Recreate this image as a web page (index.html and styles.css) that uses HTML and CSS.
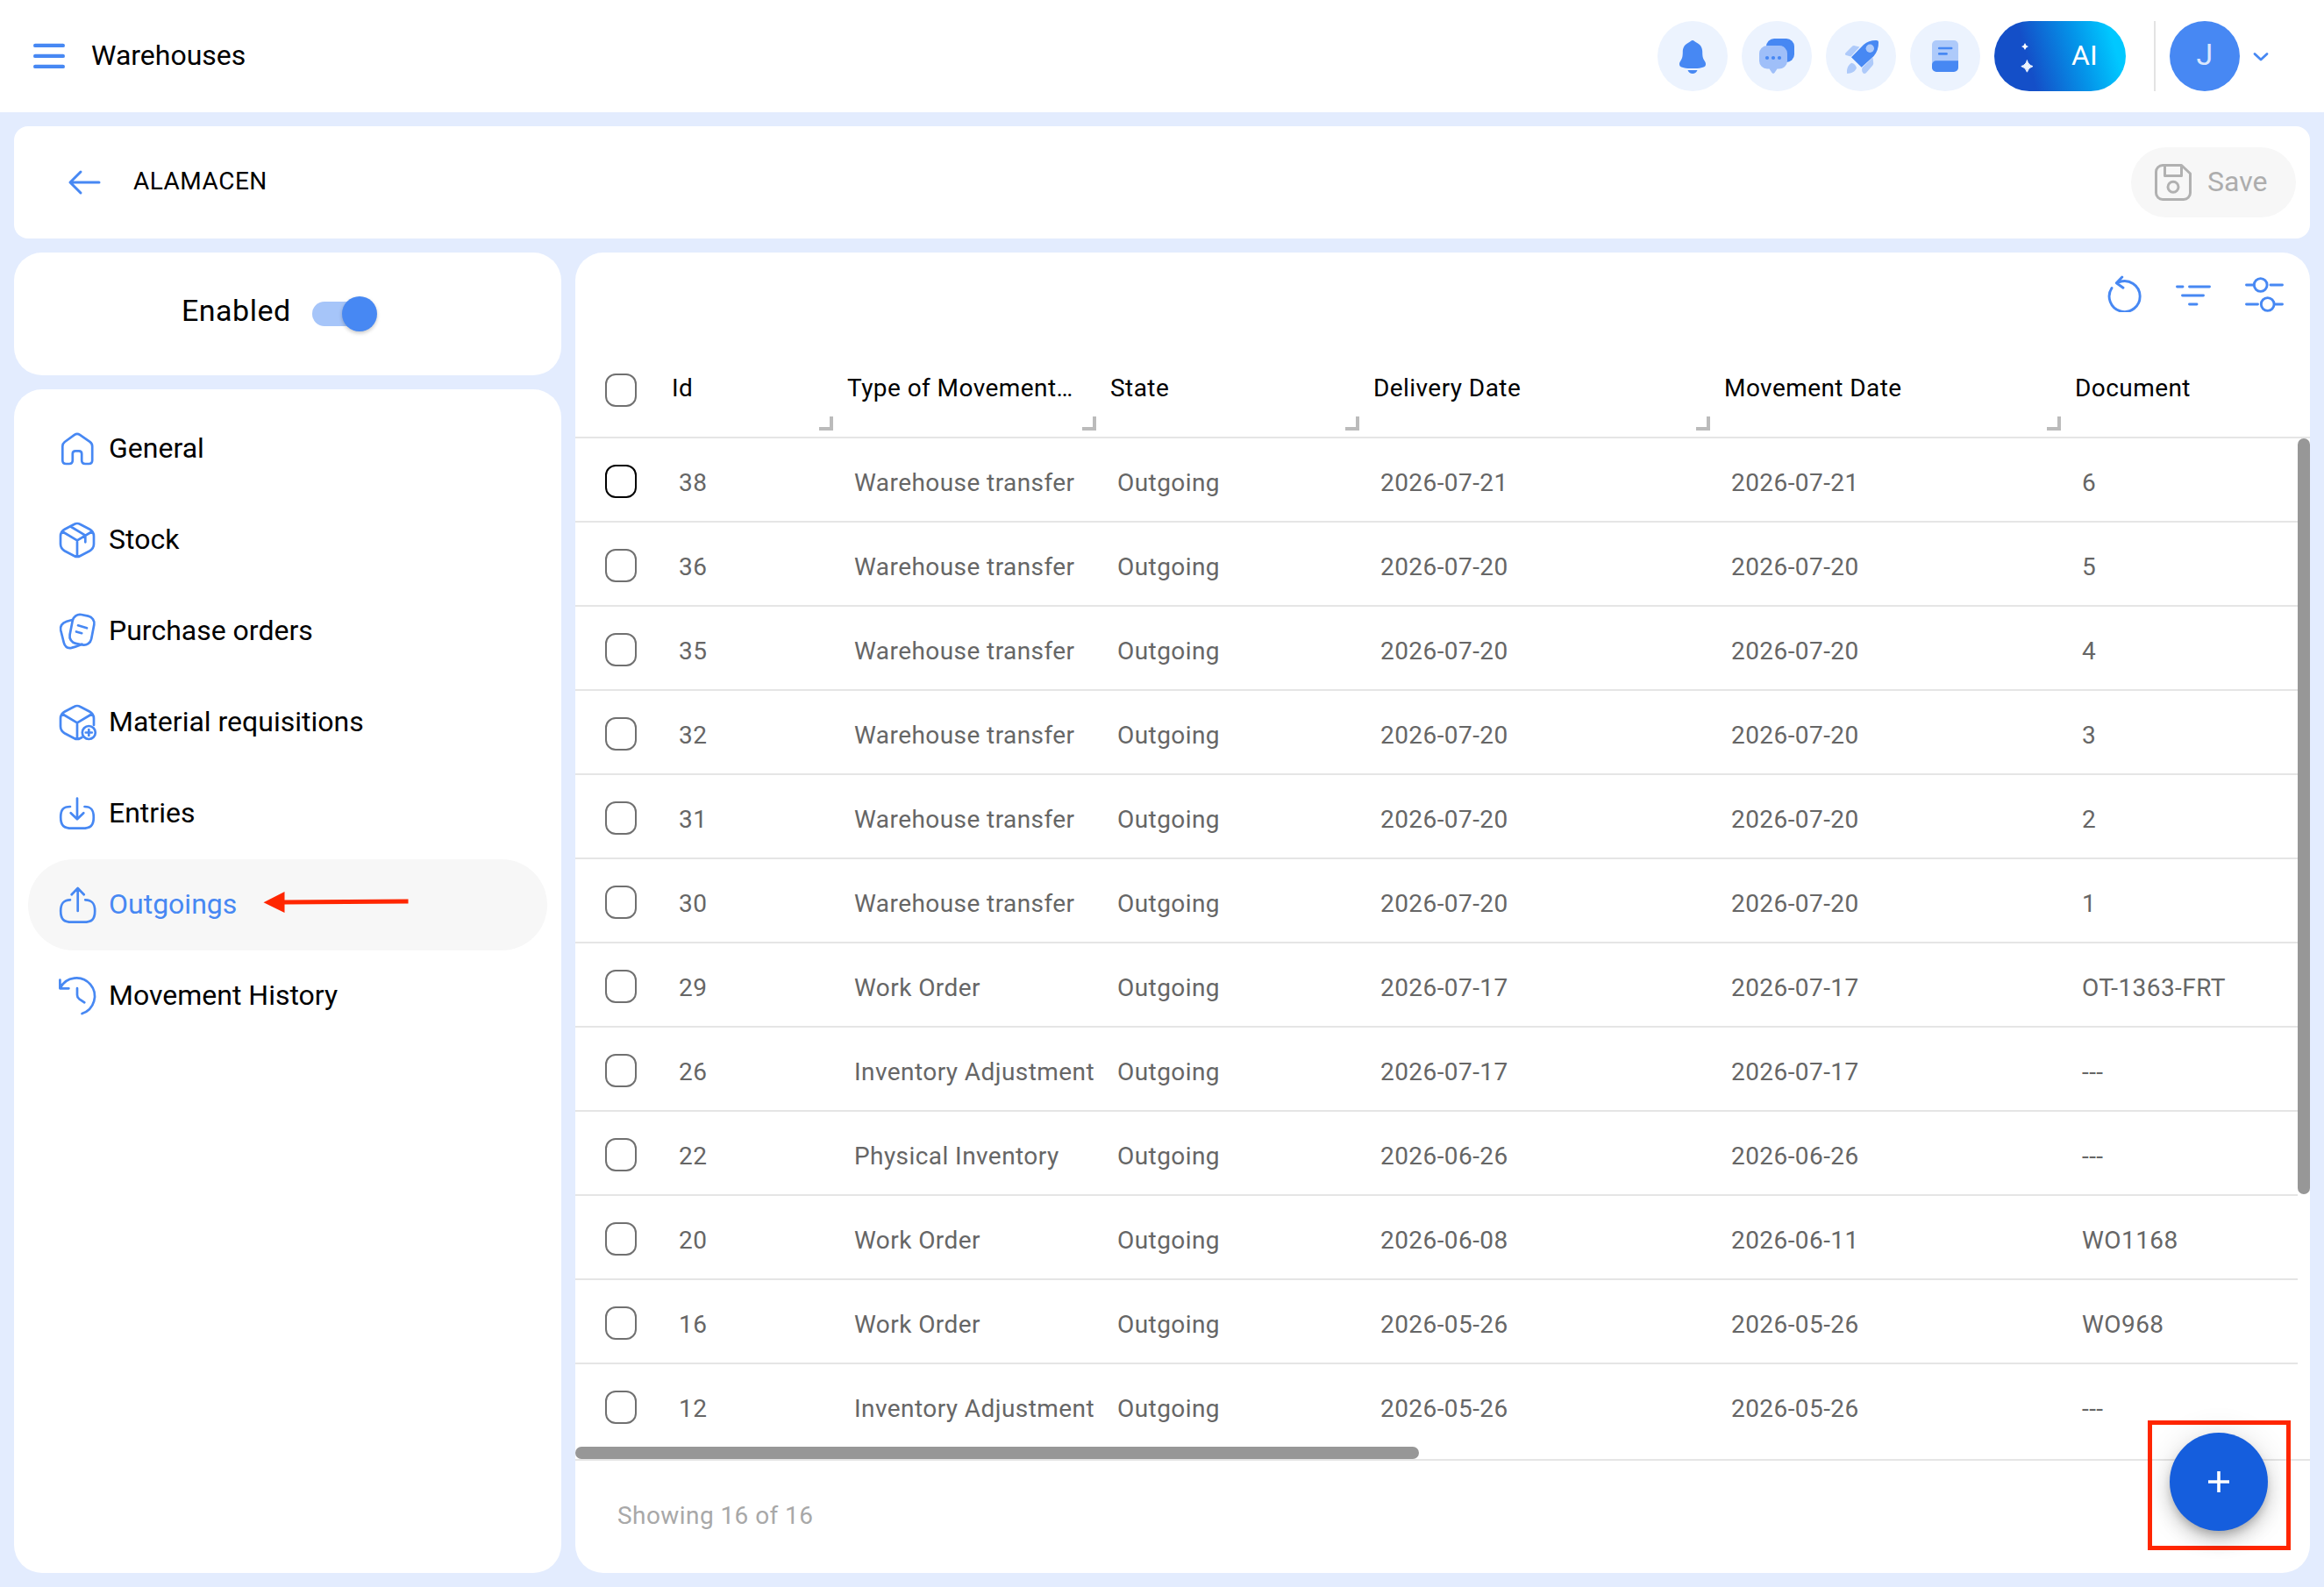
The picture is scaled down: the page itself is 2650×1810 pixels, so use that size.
FILE: index.html
```html
<!DOCTYPE html>
<html lang="en">
<head>
    <meta charset="UTF-8">
    <meta name="viewport" content="width=device-width, initial-scale=1.0">
    <title>Warehouses</title>
    <link rel="stylesheet" href="styles.css">
</head>
<body>
    <header class="topbar">
        <svg class="menu-icon" width="36" height="30" viewBox="0 0 36 30"><path d="M2.2 2.900h31.600M2.200 14.900h31.600M2.200 26.900h31.600"/></svg>
        <h1 class="title">Warehouses</h1>
        <div class="actions">
            <div class="round">
                <svg viewBox="0 0 80 80">
                    <path class="main" d="M40 22c1.6 0 2.6 1.7 4.4 2.6 4.6 2.3 6.8 5.8 6.8 10.4 0 5 .5 7.400 2.200 10 1.400 2.200 2 3.600 1.400 5.400-.8 2.600-7 3.600-14.800 3.600s-14-1-14.800-3.600c-.6-1.800 0-3.200 1.400-5.400 1.700-2.600 2.200-5 2.200-10 0-4.600 2.200-8.100 6.800-10.400C37.400 23.700 38.400 22 40 22z"/>
                    <path class="main" d="M34.500 56h11c-1 2.600-3 4-5.500 4s-4.500-1.400-5.500-4z"/>
                </svg>
            </div>
            <div class="round">
                <svg viewBox="0 0 80 80">
                    <rect class="main" x="28" y="20" width="32" height="27" rx="9"/>
                    <path class="soft" d="M29 28h14a9 9 0 0 1 9 9v8.500a9 9 0 0 1-9 9h-2.500l-3 4.600a1.800 1.800 0 0 1-3 0l-3-4.600H29a9 9 0 0 1-9-9V37a9 9 0 0 1 9-9z"/>
                    <g class="main"><circle cx="29" cy="42" r="2.100"/><circle cx="36" cy="42" r="2.100"/><circle cx="43" cy="42" r="2.100"/></g>
                </svg>
            </div>
            <div class="round">
                <svg viewBox="0 0 80 80">
                    <path class="pale" d="M28.500 40.500l-5.500-1.500c-1.300-.6-1.300-1.800-.4-2.800l7-7c1-1 2-1.300 3.400-1l5.500 1.200zM41.500 53l12-11.500.7 6.200c.1 1.200-.2 2.200-1 3l-7.400 8.500c-1.200 1.200-3 1-3.800-.4-1.200-1.800-1-3.800-.5-5.800zM24.200 60c-.6-4 0-9 5-12.300 3.200.8 5.200 2.900 5.800 5.800-1.500 4.500-6 6-10.800 6.500z"/>
                    <path class="main" d="M29 41.300L43 27c4.200-3.500 9-5.200 14.500-5 1.600 0 2.500.8 2.500 2.300.2 6-1.600 11.200-5.400 15.700L40.700 52.700z"/>
                    <circle class="pale" cx="50.300" cy="31.300" r="4.700"/>
                </svg>
            </div>
            <div class="round">
                <svg viewBox="0 0 80 80">
                    <rect class="pale" x="25" y="22" width="30" height="35" rx="5"/>
                    <path class="main" d="M30 45.300h25V53a5 5 0 0 1-5 5H30a5 5 0 0 1-5-5v-3a4.700 4.700 0 0 1 5-4.700z"/>
                    <path class="line" d="M33.200 31h14M33.200 37.400h8.400"/>
                </svg>
            </div>
            <div class="ai">
                <svg width="50" height="80" viewBox="0 0 50 80"><path d="M35 25q.8 3.200 4 4-3.200.8-4 4-.8-3.200-4-4 3.200-.8 4-4z"/><path class="big" d="M37.400 45q1.400 5.200 6.600 6.600-5.200 1.400-6.600 6.600-1.400-5.200-6.600-6.600 5.200-1.400 6.600-6.600z"/></svg>
                <span>AI</span>
            </div>
            <div class="divider"></div>
            <div class="avatar">J</div>
            <svg class="chevron" width="18" height="12" viewBox="0 0 18 12"><path d="M2 2.500l7 6.500 7-6.500"/></svg>
        </div>
    </header>

    <div class="subbar">
        <svg class="back" width="38" height="30" viewBox="0 0 38 30"><path d="M36 15H3M15 3L3 15l12 12"/></svg>
        <span class="name">ALAMACEN</span>
        <button class="save">
            <svg width="42" height="42" viewBox="0 0 42 42"><path d="M9 1.500h21.500l10 9.500v22a7.500 7.500 0 0 1-7.500 7.500H9A7.500 7.500 0 0 1 1.500 33V9A7.500 7.500 0 0 1 9 1.500zM11.500 2v11.500h19V2"/><circle cx="21" cy="26.300" r="6"/></svg>
            <span>Save</span>
        </button>
    </div>

    <main class="content">
        <aside class="sidebar">
            <div class="card enabled">
                <span>Enabled</span>
                <div class="switch"><div class="knob"></div></div>
            </div>
            <nav class="card menu">
                <a class="item">
                    <svg viewBox="0 0 48 48"><path d="M21 7.900q3-2 6 0l11.500 8q2.700 2 2.700 5V37q0 4-4 4h-4q-4 0-4-4v-7.500q0-3.200-3.200-3.200h-4q-3.200 0-3.200 3.200V37q0 4-4 4h-3.500q-4 0-4-4V21q0-3 2.500-5z"/></svg>
                    <span>General</span>
                </a>
                <a class="item">
                    <svg viewBox="0 0 48 48"><path d="M20.500 6q3.500-2 7 0l10.500 5.500q5 2.800 5 8v9q0 5-5 8L27.500 42q-3.500 2-7 0L10 36.500q-5-3-5-8v-9q0-5.200 5-8zM7.500 14.500L24 24.300l16.500-9.800M24 24.300V43M16.500 8.500l16.800 10.200v7.600"/></svg>
                    <span>Stock</span>
                </a>
                <a class="item">
                    <svg viewBox="0 0 48 48"><rect x="17" y="5.500" width="25" height="33.500" rx="8.500" transform="rotate(11 29.500 22)"/><path d="M18.300 11l-6.300 1.800C6.300 14.800 4.300 18.300 5.300 23l3.500 14c1.300 4.800 4.200 6.700 8.700 5.900 4-1 8-2.500 12-4.200M25 17.300l10 3M23 24.500l6.200 1.700"/></svg>
                    <span>Purchase orders</span>
                </a>
                <a class="item">
                    <svg viewBox="0 0 48 48"><path d="M29.500 41L27.500 42q-3.500 2-7 0L10 36.500q-5-3-5-8v-9q0-5.200 5-8L20.500 6q3.500-2 7 0L38 11.500q5 2.800 5 8V27M7.500 14.500L24 24.300l16.500-9.800M24 24.300V43"/><circle cx="37.300" cy="35.500" r="7.500"/><path d="M37.300 32v7M33.800 35.500h7"/></svg>
                    <span>Material requisitions</span>
                </a>
                <a class="item">
                    <svg viewBox="0 0 48 48"><path d="M16 16C8.500 16 5.200 19 5.200 28c0 9.500 3.500 12.700 13 12.700h11.600c9.500 0 13-3.200 13-12.700 0-9-3.300-12-10.300-12M24 6.500V30M16.700 23.300L24 30.300l7.300-7"/></svg>
                    <span>Entries</span>
                </a>
                <a class="item active">
                    <svg viewBox="0 0 48 48"><path d="M16 18.300C8.500 18.500 5.200 22 5.200 31c0 9.500 3.500 12.700 13 12.700h13c9.500 0 13-3.200 13-12.700 0-9-3.300-12.500-11-12.700M24.700 31V5M17.700 12.300l7-7.300 7 7.300"/></svg>
                    <span>Outgoings</span>
                    <svg class="pointer" width="166" height="26" viewBox="0 0 166 26"><path d="M24.500 10.600L165.500 9.500v5L24.500 15.600V25L.5 13.200l24-12.200z"/></svg>
                </a>
                <a class="item">
                    <svg viewBox="0 0 48 48"><path d="M4.600 14.800A20.800 20.800 0 1 1 29.500 44M4.400 5.500v9.800h10M24 15.200v7.500c0 2.300.5 3.200 2.300 4.600l6 4"/></svg>
                    <span>Movement History</span>
                </a>
            </nav>
        </aside>

        <section class="card table">
            <div class="tools">
                <svg width="40" height="46" viewBox="0 0 40 46"><path d="M6 18.500A17.500 17.500 0 1 0 14.500 11.700L11.500 12.300M17.800 6L11.300 12.700l7.700 5.500"/></svg>
                <svg width="40" height="46" viewBox="0 0 40 46"><path d="M1.500 17h6.500M15.500 17h23M7.500 27h24M15.500 37h8.500"/></svg>
                <svg width="44" height="46" viewBox="0 0 44 46"><path d="M1.500 15H10M29 15h13.500M1.500 37H14.500M34.500 37h8"/><circle cx="17.700" cy="15" r="7.400"/><circle cx="25.700" cy="37" r="7.400"/></svg>
            </div>
            <div class="row head">
                <div><i class="check"></i></div>
                <div class="col">Id</div>
                <div class="col">Type of Movement…</div>
                <div class="col">State</div>
                <div class="col">Delivery Date</div>
                <div class="col">Movement Date</div>
                <div>Document</div>
            </div>
            <div class="body">
                <div class="rows">
                    <div class="row"><div><i class="check focus"></i></div><div>38</div><div>Warehouse transfer</div><div>Outgoing</div><div>2026-07-21</div><div>2026-07-21</div><div>6</div></div>
                    <div class="row"><div><i class="check"></i></div><div>36</div><div>Warehouse transfer</div><div>Outgoing</div><div>2026-07-20</div><div>2026-07-20</div><div>5</div></div>
                    <div class="row"><div><i class="check"></i></div><div>35</div><div>Warehouse transfer</div><div>Outgoing</div><div>2026-07-20</div><div>2026-07-20</div><div>4</div></div>
                    <div class="row"><div><i class="check"></i></div><div>32</div><div>Warehouse transfer</div><div>Outgoing</div><div>2026-07-20</div><div>2026-07-20</div><div>3</div></div>
                    <div class="row"><div><i class="check"></i></div><div>31</div><div>Warehouse transfer</div><div>Outgoing</div><div>2026-07-20</div><div>2026-07-20</div><div>2</div></div>
                    <div class="row"><div><i class="check"></i></div><div>30</div><div>Warehouse transfer</div><div>Outgoing</div><div>2026-07-20</div><div>2026-07-20</div><div>1</div></div>
                    <div class="row"><div><i class="check"></i></div><div>29</div><div>Work Order</div><div>Outgoing</div><div>2026-07-17</div><div>2026-07-17</div><div>OT-1363-FRT</div></div>
                    <div class="row"><div><i class="check"></i></div><div>26</div><div>Inventory Adjustment</div><div>Outgoing</div><div>2026-07-17</div><div>2026-07-17</div><div>---</div></div>
                    <div class="row"><div><i class="check"></i></div><div>22</div><div>Physical Inventory</div><div>Outgoing</div><div>2026-06-26</div><div>2026-06-26</div><div>---</div></div>
                    <div class="row"><div><i class="check"></i></div><div>20</div><div>Work Order</div><div>Outgoing</div><div>2026-06-08</div><div>2026-06-11</div><div>WO1168</div></div>
                    <div class="row"><div><i class="check"></i></div><div>16</div><div>Work Order</div><div>Outgoing</div><div>2026-05-26</div><div>2026-05-26</div><div>WO968</div></div>
                    <div class="row"><div><i class="check"></i></div><div>12</div><div>Inventory Adjustment</div><div>Outgoing</div><div>2026-05-26</div><div>2026-05-26</div><div>---</div></div>
                </div>
                <div class="vscroll"></div>
            </div>
            <div class="hscroll"></div>
            <div class="footer">Showing 16 of 16</div>
            <div class="highlight">
                <button class="add"><svg width="26" height="26" viewBox="0 0 26 26"><path d="M13 1v24M1 13h24"/></svg></button>
            </div>
        </section>
    </main>
</body>
</html>
```
FILE: styles.css
```css
* {
    box-sizing: border-box;
}

body {
    margin: 0;
    height: 1810px;
    display: flex;
    flex-direction: column;
    background-color: #e3ecfe;
    font-family: Roboto, Arial, sans-serif;
    font-size: 32px;
    color: #000;
    overflow: hidden;
}

svg {
    flex: none;
    fill: none;
    stroke: #4788f3;
    stroke-linecap: round;
    stroke-linejoin: round;
}

button {
    font: inherit;
    border: none;
    padding: 0;
}

/* top bar */
.topbar {
    height: 128px;
    background-color: #fff;
    display: flex;
    align-items: center;
    padding: 0 63px 0 38px;
}

.menu-icon {
    stroke-width: 4.4;
}

.title {
    margin: 0 0 2px 30px;
    font-size: 32px;
    font-weight: 400;
}

.actions {
    margin-left: auto;
    display: flex;
    align-items: center;
    gap: 16px;
}

.round {
    width: 80px;
    height: 80px;
    border-radius: 50%;
    background-color: #ecf3fe;
}

.round svg {
    display: block;
    stroke: none;
}

.round .main {
    fill: #4788f3;
}

.round .soft {
    fill: #9fbff9;
}

.round .pale {
    fill: #aecafa;
}

.round .line {
    stroke: #4788f3;
    stroke-width: 2.6;
}

.ai {
    width: 150px;
    height: 80px;
    border-radius: 40px;
    background: linear-gradient(74deg, #144fc8 28%, #0494e9 63%, #00c8ff 88%);
    color: #fff;
    display: flex;
    align-items: center;
}

.ai svg {
    fill: #fff;
    stroke: none;
}

.ai .big {
    fill: #ecf3fe;
    stroke: #ecf3fe;
    stroke-width: 1;
}

.ai span {
    margin: 0 0 3px 38px;
}

.divider {
    width: 2px;
    height: 80px;
    margin-left: 16px;
    background-color: #e3e3e3;
}

.avatar {
    width: 80px;
    height: 80px;
    border-radius: 50%;
    background-color: #4788f3;
    color: #dae7fd;
    font-size: 34px;
    line-height: 77px;
    text-align: center;
}

.chevron {
    stroke-width: 2.8;
    margin: 2px 0 0 -1px;
}

/* record bar */
.subbar {
    height: 128px;
    margin: 16px 16px 0;
    padding: 0 16px 0 61px;
    border-radius: 16px;
    background-color: #fff;
    display: flex;
    align-items: center;
}

.back {
    stroke-width: 3;
    margin-bottom: 1px;
}

.name {
    margin: 0 0 3px 37px;
    font-size: 28px;
    letter-spacing: .5px;
}

.save {
    margin-left: auto;
    width: 188px;
    height: 80px;
    border-radius: 40px;
    padding-left: 27px;
    background-color: #f7f7f7;
    color: #adadad;
    display: flex;
    align-items: center;
    gap: 18px;
}

.save svg {
    stroke: #b1b1b1;
    stroke-width: 3;
}

.save span {
    margin-bottom: 2px;
}

.content {
    flex: 1;
    display: flex;
    gap: 16px;
    padding: 16px;
    min-height: 0;
}

.card {
    background-color: #fff;
    border-radius: 32px;
}

/* sidebar */
.sidebar {
    width: 624px;
    display: flex;
    flex-direction: column;
    gap: 16px;
}

.enabled {
    height: 140px;
    display: flex;
    align-items: center;
    padding-left: 191px;
    font-size: 34px;
}

.enabled span {
    width: 149px;
    margin-bottom: 9px;
    letter-spacing: .5px;
}

.switch {
    width: 72px;
    height: 28px;
    border-radius: 14px;
    background-color: #a6c5f9;
    display: flex;
    align-items: center;
    justify-content: flex-end;
}

.knob {
    flex: none;
    width: 40px;
    height: 40px;
    margin-right: -2px;
    border-radius: 50%;
    background-color: #4788f3;
    box-shadow: 0 2px 4px rgba(0, 0, 0, .22);
}

.menu {
    flex: 1;
    padding: 16px;
}

.item {
    height: 104px;
    padding-left: 32px;
    border-radius: 52px;
    display: flex;
    align-items: center;
    gap: 12px;
}

.item span {
    margin-bottom: 3px;
}

.item svg {
    width: 48px;
    height: 48px;
    stroke-width: 2.7;
}

.item.active {
    background-color: #f7f7f7;
    color: #4788f3;
}

.item .pointer {
    width: 166px;
    height: 26px;
    margin: 0 0 6px 18px;
    fill: #ff2600;
    stroke: none;
}

/* table */
.table {
    flex: 1;
    position: relative;
    display: flex;
    flex-direction: column;
    font-size: 28px;
    letter-spacing: .43px;
}

.tools {
    height: 104px;
    display: flex;
    justify-content: flex-end;
    gap: 39px;
    padding: 22px 30px 0 0;
}

.tools svg {
    stroke-width: 2.9;
}

.row {
    display: grid;
    grid-template-columns: 102px 200px 300px 300px 400px 400px 1fr;
    height: 96px;
    align-items: center;
    border-bottom: 2px solid #e5e5e5;
    color: #666;
    white-space: nowrap;
}

.row div {
    padding: 6px 0 0 16px;
}

.row div:first-child {
    padding: 4px 0 0 34px;
}

.row.head {
    grid-template-columns: 94px 200px 300px 300px 400px 400px 1fr;
    height: 108px;
    color: #000;
    align-items: stretch;
}

.head div {
    padding-top: 34px;
}

.row.head div:first-child {
    padding-top: 34px;
}

.col {
    position: relative;
}

/* resize grip */
.col::after {
    content: "";
    position: absolute;
    right: 0;
    bottom: 7px;
    width: 12px;
    height: 12px;
    border-right: 4px solid #bbb;
    border-bottom: 4px solid #bbb;
}

.check {
    display: block;
    width: 36px;
    height: 38px;
    border: 2px solid #707070;
    border-radius: 12px;
}

.check.focus {
    border-color: #000;
}

.body {
    height: 1150px;
    display: flex;
    overflow: hidden;
}

.rows {
    flex: 1;
}

.vscroll {
    width: 14px;
    height: 862px;
    border-radius: 7px;
    background-color: #979797;
}

.hscroll {
    width: 962px;
    height: 14px;
    border-radius: 7px;
    background-color: #979797;
}

.footer {
    flex: 1;
    border-top: 2px solid #e5e5e5;
    padding: 46px 48px;
    color: #a8a8a8;
}

/* floating add button */
.highlight {
    position: absolute;
    right: 22px;
    bottom: 26px;
    width: 163px;
    height: 148px;
    border: 5px solid #ff2600;
}

.add {
    position: absolute;
    left: 20px;
    top: 9px;
    width: 112px;
    height: 112px;
    border-radius: 50%;
    background-color: #155edd;
    display: flex;
    align-items: center;
    justify-content: center;
    box-shadow: 0 6px 10px -2px rgba(0, 0, 0, .2), 0 12px 20px rgba(0, 0, 0, .14), 0 2px 36px rgba(0, 0, 0, .12);
}

.add svg {
    stroke: #fff;
    stroke-width: 3.6;
    stroke-linecap: butt;
}
```
